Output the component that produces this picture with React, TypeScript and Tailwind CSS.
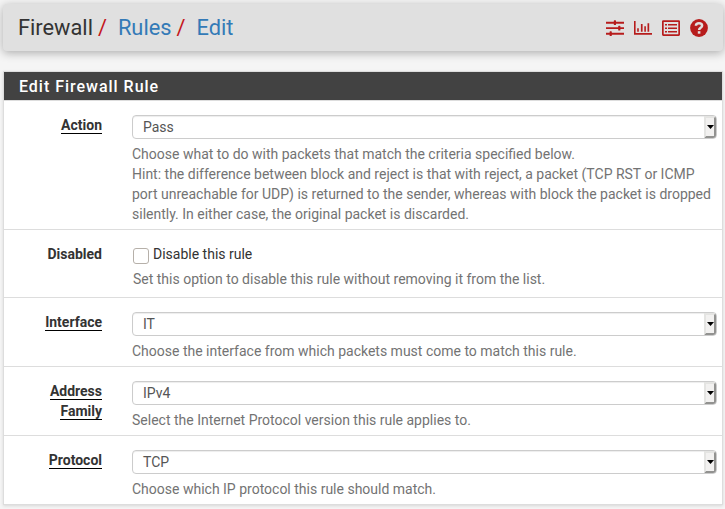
import type { ReactNode } from 'react';

function SlidersIcon() {
  return (
    <svg width="18" height="18" viewBox="0 0 18 18" fill="#b71c1c">
      <path d="M0 2.800h18v1.900H0zM0 8.200h18v1.900H0zM0 13.800h18v1.900H0z" />
      <rect x="7.800" y="1.300" width="2.200" height="4.800" rx=".6" />
      <rect x="12.200" y="6.800" width="2.200" height="4.800" rx=".6" />
      <rect x="3.600" y="12.300" width="2.200" height="4.800" rx=".6" />
    </svg>
  );
}

function ChartIcon() {
  return (
    <svg width="18" height="18" viewBox="0 0 18 18" fill="#b71c1c">
      <path d="M0 2h1.600v12H18v1.700H0zM3.200 9.300h1.600v3.500H3.200zM6.900 5h1.700v7.800H6.900zM10.300 7.300h1.600v5.500h-1.600zM13.500 4.300h1.700v8.500h-1.700z" />
    </svg>
  );
}

function ListIcon() {
  return (
    <svg width="18" height="18" viewBox="0 0 18 18" fill="#b71c1c">
      <path fillRule="evenodd" d="M1.300 1.300h15.400Q18 1.300 18 2.600v13q0 1.300-1.300 1.300H1.300Q0 16.900 0 15.600v-13Q0 1.300 1.300 1.300zM1.700 2.900v12.400h14.600V2.900z" />
      <path d="M3 5h2v1.600H3zM6 5h9v1.600H6zM3 8.400h2V10H3zM6 8.400h9V10H6zM3 12h2v1.600H3zM6 12h9v1.600H6z" />
    </svg>
  );
}

function HelpIcon() {
  return (
    <svg width="18" height="18" viewBox="0 0 18 18">
      <circle cx="9" cy="9" r="8.9" fill="#b71c1c" />
      <path d="M5.900 6.800C6 5 7.300 4.300 9 4.300s3.100.9 3.100 2.400C12.100 8.800 9.100 8.800 9.100 11" fill="none" stroke="#e0e0e0" strokeWidth="2.500" />
      <path d="M7.800 12.200h2.600v2.500H7.800z" fill="#e0e0e0" />
    </svg>
  );
}

function Select({ value }: { value: string }) {
  return (
    <div className="flex h-6 w-[585px] items-center justify-between rounded-[4px] border border-[#ccc] bg-white pl-[10px] text-[#555] shadow-[inset_0_1px_1px_rgba(0,0,0,.075)]">
      <span className="leading-[22px]">{value}</span>
      <span className="flex h-[22px] w-3 items-center justify-center rounded-r-[3px] border-2 border-t-[#e4e4e2] border-r-[#929290] border-b-[#929290] border-l-[#e4e4e2] bg-[#f2f1f0]">
        <svg width="7" height="4" viewBox="0 0 7 4" className="shrink-0">
          <path d="M0 0h7L3.500 4z" fill="#000" />
        </svg>
      </span>
    </div>
  );
}

function Row({ label, required = true, last = false, children }: { label: string; required?: boolean; last?: boolean; children: ReactNode }) {
  return (
    <div className={`flex pt-[14px] ${required ? 'pb-[5px]' : 'pb-2'} ${last ? '' : 'border-b border-[#ddd]'}`}>
      <div className="mr-[30px] w-[98px] shrink-0 pl-6 text-right font-bold text-[#333]">
        <span className={required ? 'border-b border-black' : ''}>{label}</span>
      </div>
      <div className="w-[585px]">{children}</div>
    </div>
  );
}

function Help({ children }: { children: ReactNode }) {
  return <p className="mt-[5px] whitespace-nowrap text-[#737373]">{children}</p>;
}

export default function App() {
  return (
    <div className="h-[509px] w-[725px] overflow-hidden bg-[#f5f5f5] pt-[4px] pl-[3px] font-['Roboto',sans-serif] text-[14px] leading-5 text-[#333]">
      <header className="flex h-[47px] w-[720px] items-center justify-between rounded-[4px] bg-[#e0e0e0] pr-[15px] pl-[15px] shadow-[0_2px_10px_rgba(0,0,0,.3)]">
        <h1 className="flex text-[21.8px] leading-[24px]">
          <span>Firewall</span>
          <span className="ml-[5px] text-[#c4161c]">/</span>
          <span className="ml-[11px] text-[#337ab7]">Rules</span>
          <span className="ml-[5px] text-[#c4161c]">/</span>
          <span className="ml-[11px] text-[#337ab7]">Edit</span>
        </h1>
        <div className="flex gap-[10px] pt-px">
          <SlidersIcon />
          <ChartIcon />
          <ListIcon />
          <HelpIcon />
        </div>
      </header>
      <section className="mt-5 w-[720px] border border-[#ddd] bg-white shadow-[0_1px_3px_rgba(0,0,0,.12)]">
        <h2 className="h-[29px] border-b border-[#ddd] bg-[#424242] pl-[15px] text-[16px] leading-[29px] font-medium tracking-[0.98px] text-white">Edit Firewall Rule</h2>
        <Row label="Action">
          <Select value="Pass" />
          <Help>
            Choose what to do with packets that match the criteria specified below.
            <br />
            Hint: the difference between block and reject is that with reject, a packet (TCP RST or ICMP
            <br />
            port unreachable for UDP) is returned to the sender, whereas with block the packet is dropped
            <br />
            silently. In either case, the original packet is discarded.
          </Help>
        </Row>
        <Row label="Disabled" required={false}>
          <label className="flex h-5 items-center">
            <span className="mt-[3px] ml-px h-4 w-4 rounded-[3px] border border-[#b6b0a9] bg-white" />
            <span className="ml-1">Disable this rule</span>
          </label>
          <p className="mt-[5px] ml-px text-[#737373]">Set this option to disable this rule without removing it from the list.</p>
        </Row>
        <Row label="Interface">
          <Select value="IT" />
          <Help>Choose the interface from which packets must come to match this rule.</Help>
        </Row>
        <Row label="Address Family">
          <Select value="IPv4" />
          <Help>Select the Internet Protocol version this rule applies to.</Help>
        </Row>
        <Row label="Protocol" last>
          <Select value="TCP" />
          <Help>Choose which IP protocol this rule should match.</Help>
        </Row>
      </section>
    </div>
  );
}
